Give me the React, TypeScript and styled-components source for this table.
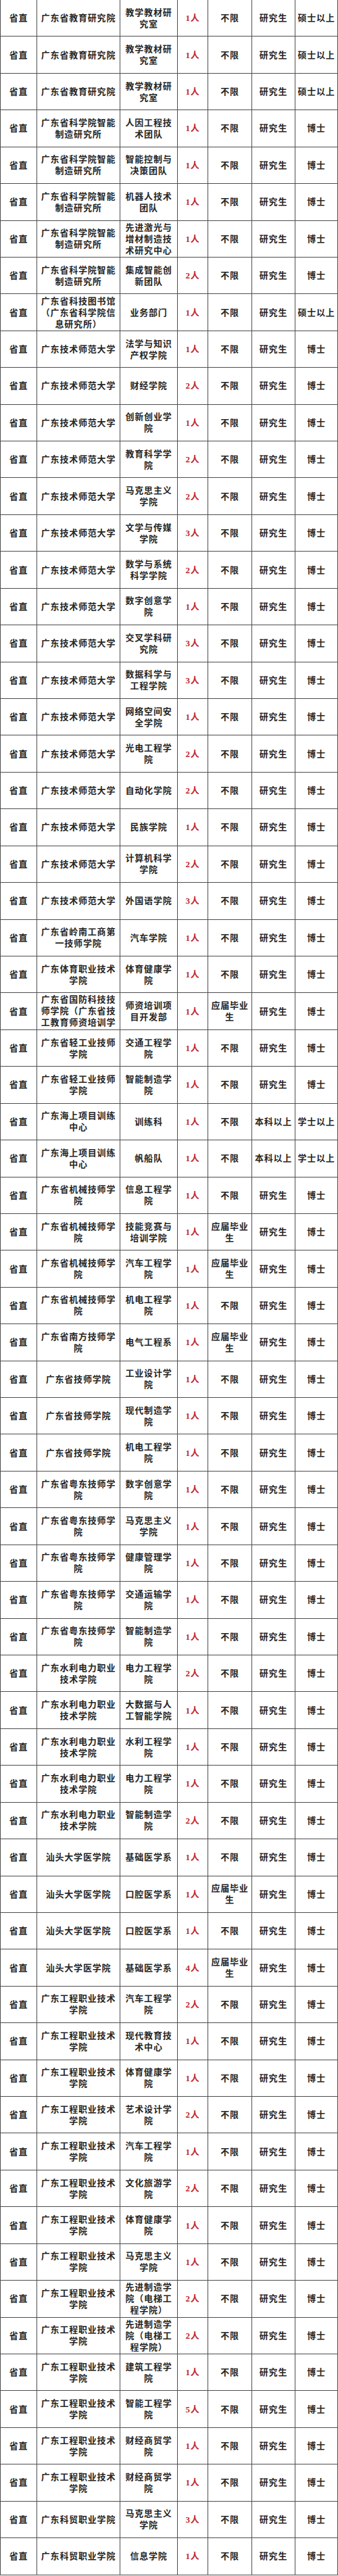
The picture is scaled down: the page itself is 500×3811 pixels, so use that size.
import styled, { createGlobalStyle } from "styled-components";

interface Post {
  unit: string;
  dept: string;
  count: number;
  fresh?: boolean;
  edu?: string;
  degree?: string;
}

const lineColor = "#4d4d4d";

const GlobalStyle = createGlobalStyle`
  html, body {
    margin: 0;
    padding: 0;
    background: #ffffff;
  }
  body {
    font-family: "Liberation Serif", "Noto Sans CJK SC", serif;
  }
`;

const Sheet = styled.div`
  width: 500px;
  border-left: 1px solid ${lineColor};
  box-sizing: border-box;
`;

const Row = styled.div`
  display: grid;
  grid-template-columns: 54px 123px 85px 45px 65px 64px 63px;
  height: 54.43px;
`;

const Cell = styled.div<{ $accent?: boolean }>`
  display: flex;
  overflow: hidden;
  box-sizing: border-box;
  padding: 1px 3px;
  border-right: 1px solid ${lineColor};
  border-bottom: 1px solid ${lineColor};
  font-size: 13px;
  line-height: 17px;
  letter-spacing: 0.8px;
  font-weight: 700;
  text-align: center;
  color: ${(props) => (props.$accent ? "#bf2a30" : "#262626")};
`;

// auto margins centre the text, but fall back to the top when it overflows
const CellText = styled.span`
  margin: auto;
`;

const ZN = "广东省科学院智能制造研究所";
const GJ = "广东技术师范大学";
const JX = "广东省机械技师学院";
const JS = "广东省技师学院";
const YD = "广东省粤东技师学院";
const SL = "广东水利电力职业技术学院";
const ST = "汕头大学医学院";
const GC = "广东工程职业技术学院";
const KM = "广东科贸职业学院";
const HS = "广东海上项目训练中心";
const QG = "广东省轻工业技师学院";

const posts: Post[] = [
  { unit: "广东省教育研究院", dept: "教学教材研究室", count: 1, degree: "硕士以上" },
  { unit: "广东省教育研究院", dept: "教学教材研究室", count: 1, degree: "硕士以上" },
  { unit: "广东省教育研究院", dept: "教学教材研究室", count: 1, degree: "硕士以上" },
  { unit: ZN, dept: "人因工程技术团队", count: 1 },
  { unit: ZN, dept: "智能控制与决策团队", count: 1 },
  { unit: ZN, dept: "机器人技术团队", count: 1 },
  { unit: ZN, dept: "先进激光与增材制造技术研究中心", count: 1 },
  { unit: ZN, dept: "集成智能创新团队", count: 2 },
  { unit: "广东省科技图书馆（广东省科学院信息研究所）", dept: "业务部门", count: 1, degree: "硕士以上" },
  { unit: GJ, dept: "法学与知识产权学院", count: 1 },
  { unit: GJ, dept: "财经学院", count: 2 },
  { unit: GJ, dept: "创新创业学院", count: 1 },
  { unit: GJ, dept: "教育科学学院", count: 2 },
  { unit: GJ, dept: "马克思主义学院", count: 2 },
  { unit: GJ, dept: "文学与传媒学院", count: 3 },
  { unit: GJ, dept: "数学与系统科学学院", count: 2 },
  { unit: GJ, dept: "数字创意学院", count: 1 },
  { unit: GJ, dept: "交叉学科研究院", count: 3 },
  { unit: GJ, dept: "数据科学与工程学院", count: 3 },
  { unit: GJ, dept: "网络空间安全学院", count: 1 },
  { unit: GJ, dept: "光电工程学院", count: 2 },
  { unit: GJ, dept: "自动化学院", count: 2 },
  { unit: GJ, dept: "民族学院", count: 1 },
  { unit: GJ, dept: "计算机科学学院", count: 2 },
  { unit: GJ, dept: "外国语学院", count: 3 },
  { unit: "广东省岭南工商第一技师学院", dept: "汽车学院", count: 1 },
  { unit: "广东体育职业技术学院", dept: "体育健康学院", count: 1 },
  { unit: "广东省国防科技技师学院（广东省技工教育师资培训学院）", dept: "师资培训项目开发部", count: 1, fresh: true },
  { unit: QG, dept: "交通工程学院", count: 1 },
  { unit: QG, dept: "智能制造学院", count: 1 },
  { unit: HS, dept: "训练科", count: 1, edu: "本科以上", degree: "学士以上" },
  { unit: HS, dept: "帆船队", count: 1, edu: "本科以上", degree: "学士以上" },
  { unit: JX, dept: "信息工程学院", count: 1 },
  { unit: JX, dept: "技能竞赛与培训学院", count: 1, fresh: true },
  { unit: JX, dept: "汽车工程学院", count: 1, fresh: true },
  { unit: JX, dept: "机电工程学院", count: 1 },
  { unit: "广东省南方技师学院", dept: "电气工程系", count: 1, fresh: true },
  { unit: JS, dept: "工业设计学院", count: 1 },
  { unit: JS, dept: "现代制造学院", count: 1 },
  { unit: JS, dept: "机电工程学院", count: 1 },
  { unit: YD, dept: "数字创意学院", count: 1 },
  { unit: YD, dept: "马克思主义学院", count: 1 },
  { unit: YD, dept: "健康管理学院", count: 1 },
  { unit: YD, dept: "交通运输学院", count: 1 },
  { unit: YD, dept: "智能制造学院", count: 1 },
  { unit: SL, dept: "电力工程学院", count: 2 },
  { unit: SL, dept: "大数据与人工智能学院", count: 1 },
  { unit: SL, dept: "水利工程学院", count: 1 },
  { unit: SL, dept: "电力工程学院", count: 1 },
  { unit: SL, dept: "智能制造学院", count: 2 },
  { unit: ST, dept: "基础医学系", count: 1 },
  { unit: ST, dept: "口腔医学系", count: 1, fresh: true },
  { unit: ST, dept: "口腔医学系", count: 1 },
  { unit: ST, dept: "基础医学系", count: 4, fresh: true },
  { unit: GC, dept: "汽车工程学院", count: 2 },
  { unit: GC, dept: "现代教育技术中心", count: 1 },
  { unit: GC, dept: "体育健康学院", count: 1 },
  { unit: GC, dept: "艺术设计学院", count: 2 },
  { unit: GC, dept: "汽车工程学院", count: 1 },
  { unit: GC, dept: "文化旅游学院", count: 2 },
  { unit: GC, dept: "体育健康学院", count: 1 },
  { unit: GC, dept: "马克思主义学院", count: 1 },
  { unit: GC, dept: "先进制造学院（电梯工程学院）", count: 2 },
  { unit: GC, dept: "先进制造学院（电梯工程学院）", count: 2 },
  { unit: GC, dept: "建筑工程学院", count: 1 },
  { unit: GC, dept: "智能工程学院", count: 5 },
  { unit: GC, dept: "财经商贸学院", count: 1 },
  { unit: GC, dept: "财经商贸学院", count: 1 },
  { unit: KM, dept: "马克思主义学院", count: 3 },
  { unit: KM, dept: "信息学院", count: 1 },
];

function PostRow({ post }: { post: Post }) {
  const cells = [
    "省直",
    post.unit,
    post.dept,
    `${post.count}人`,
    post.fresh ? "应届毕业生" : "不限",
    post.edu ?? "研究生",
    post.degree ?? "博士",
  ];
  return (
    <Row>
      {cells.map((text, i) => (
        <Cell key={i} $accent={i === 3}>
          <CellText>{text}</CellText>
        </Cell>
      ))}
    </Row>
  );
}

export default function App() {
  return (
    <>
      <GlobalStyle />
      <Sheet>
        {posts.map((post, i) => (
          <PostRow key={i} post={post} />
        ))}
      </Sheet>
    </>
  );
}
